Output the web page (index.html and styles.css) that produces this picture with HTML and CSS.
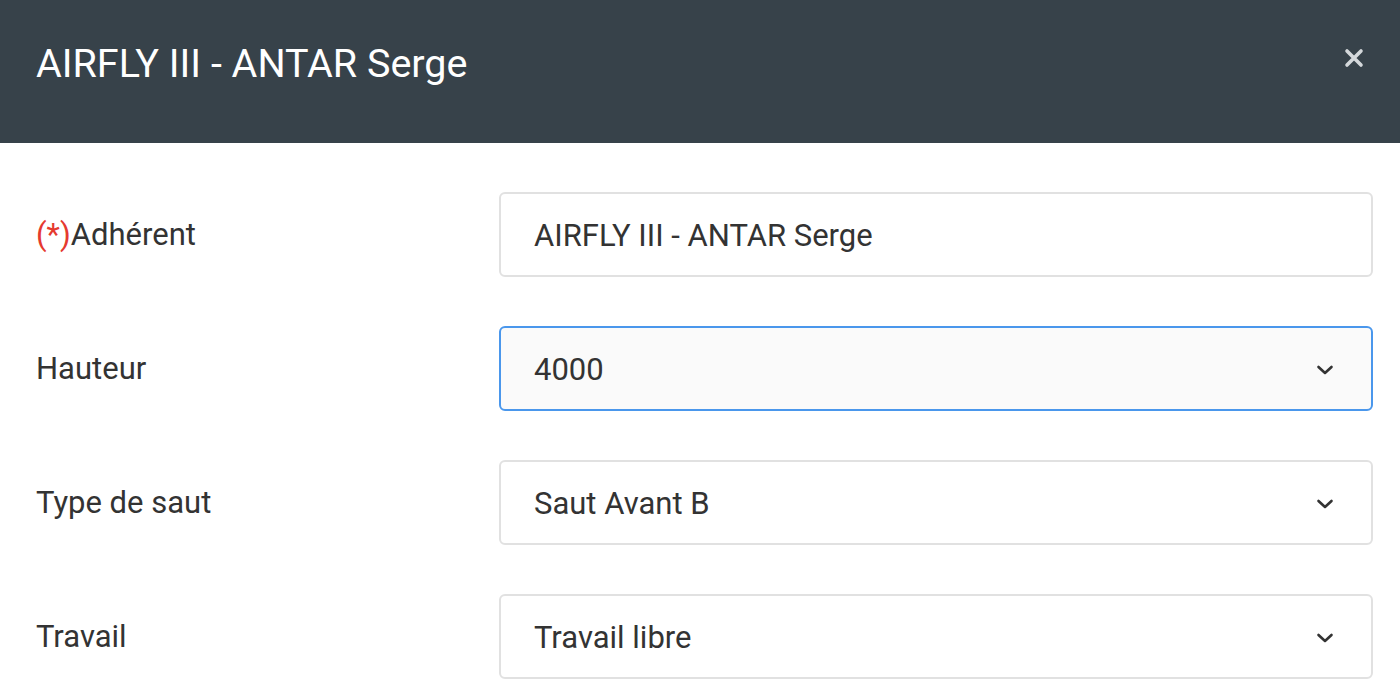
FILE: index.html
```html
<!DOCTYPE html>
<html lang="fr">
<head>
<meta charset="utf-8">
<title>AIRFLY III - ANTAR Serge</title>
<link rel="stylesheet" href="styles.css">
</head>
<body>
<div class="modal">
  <header class="modal-header">
    <h1 class="modal-title">AIRFLY III - ANTAR Serge</h1>
    <button class="close" type="button" aria-label="Fermer">
      <svg width="20" height="20" viewBox="0 0 20 20"><path d="M3 3 L17 17 M17 3 L3 17" stroke="currentColor" stroke-width="3.6" stroke-linecap="round"/></svg>
    </button>
  </header>
  <form class="modal-body">
    <div class="row">
      <label class="label"><span class="req">(*)</span>Adhérent</label>
      <div class="control">AIRFLY III - ANTAR Serge</div>
    </div>
    <div class="row">
      <label class="label">Hauteur</label>
      <div class="control select focus">4000
        <svg class="chev" width="18" height="12" viewBox="0 0 18 12"><path d="M2.5 3 L9 9 L15.5 3" fill="none" stroke="currentColor" stroke-width="2.6" stroke-linecap="round" stroke-linejoin="round"/></svg>
      </div>
    </div>
    <div class="row">
      <label class="label">Type de saut</label>
      <div class="control select">Saut Avant B
        <svg class="chev" width="18" height="12" viewBox="0 0 18 12"><path d="M2.5 3 L9 9 L15.5 3" fill="none" stroke="currentColor" stroke-width="2.6" stroke-linecap="round" stroke-linejoin="round"/></svg>
      </div>
    </div>
    <div class="row">
      <label class="label">Travail</label>
      <div class="control select">Travail libre
        <svg class="chev" width="18" height="12" viewBox="0 0 18 12"><path d="M2.5 3 L9 9 L15.5 3" fill="none" stroke="currentColor" stroke-width="2.6" stroke-linecap="round" stroke-linejoin="round"/></svg>
      </div>
    </div>
  </form>
</div>
</body>
</html>
```
FILE: styles.css
```css
html, body {
  margin: 0;
  padding: 0;
  background: #ffffff;
  font-family: Roboto, "Liberation Sans", Arial, sans-serif;
  color: #333333;
}
.modal {
  width: 1400px;
  height: 700px;
  overflow: hidden;
}
.modal-header {
  height: 143px;
  background: #37424a;
  display: flex;
  align-items: center;
  justify-content: space-between;
  padding: 0 36px;
  box-sizing: border-box;
}
.modal-title {
  margin: 0;
  margin-top: -17px;
  font-size: 39.5px;
  font-weight: 400;
  color: #ffffff;
}
.close {
  background: none;
  border: 0;
  padding: 0;
  margin: -28px 0 0 0;
  color: #d4d8db;
  display: flex;
  cursor: pointer;
}
.modal-body {
  padding: 49px 27px 0 36px;
  display: flex;
  flex-direction: column;
  gap: 49px;
}
.row {
  display: grid;
  grid-template-columns: 463px 874px;
  align-items: center;
}
.label {
  font-size: 31px;
  color: #333333;
}
.req {
  color: #e53a2f;
}
.control {
  height: 85px;
  box-sizing: border-box;
  border: 2px solid #e1e1e1;
  border-radius: 6px;
  background: #ffffff;
  padding: 2px 33px 0;
  font-size: 31px;
  color: #333333;
  display: flex;
  align-items: center;
}
.select {
  justify-content: space-between;
}
.focus {
  border-color: #4a97ec;
  background: #fafafa;
}
.chev {
  color: #333333;
  margin-right: 4px;
}
```
